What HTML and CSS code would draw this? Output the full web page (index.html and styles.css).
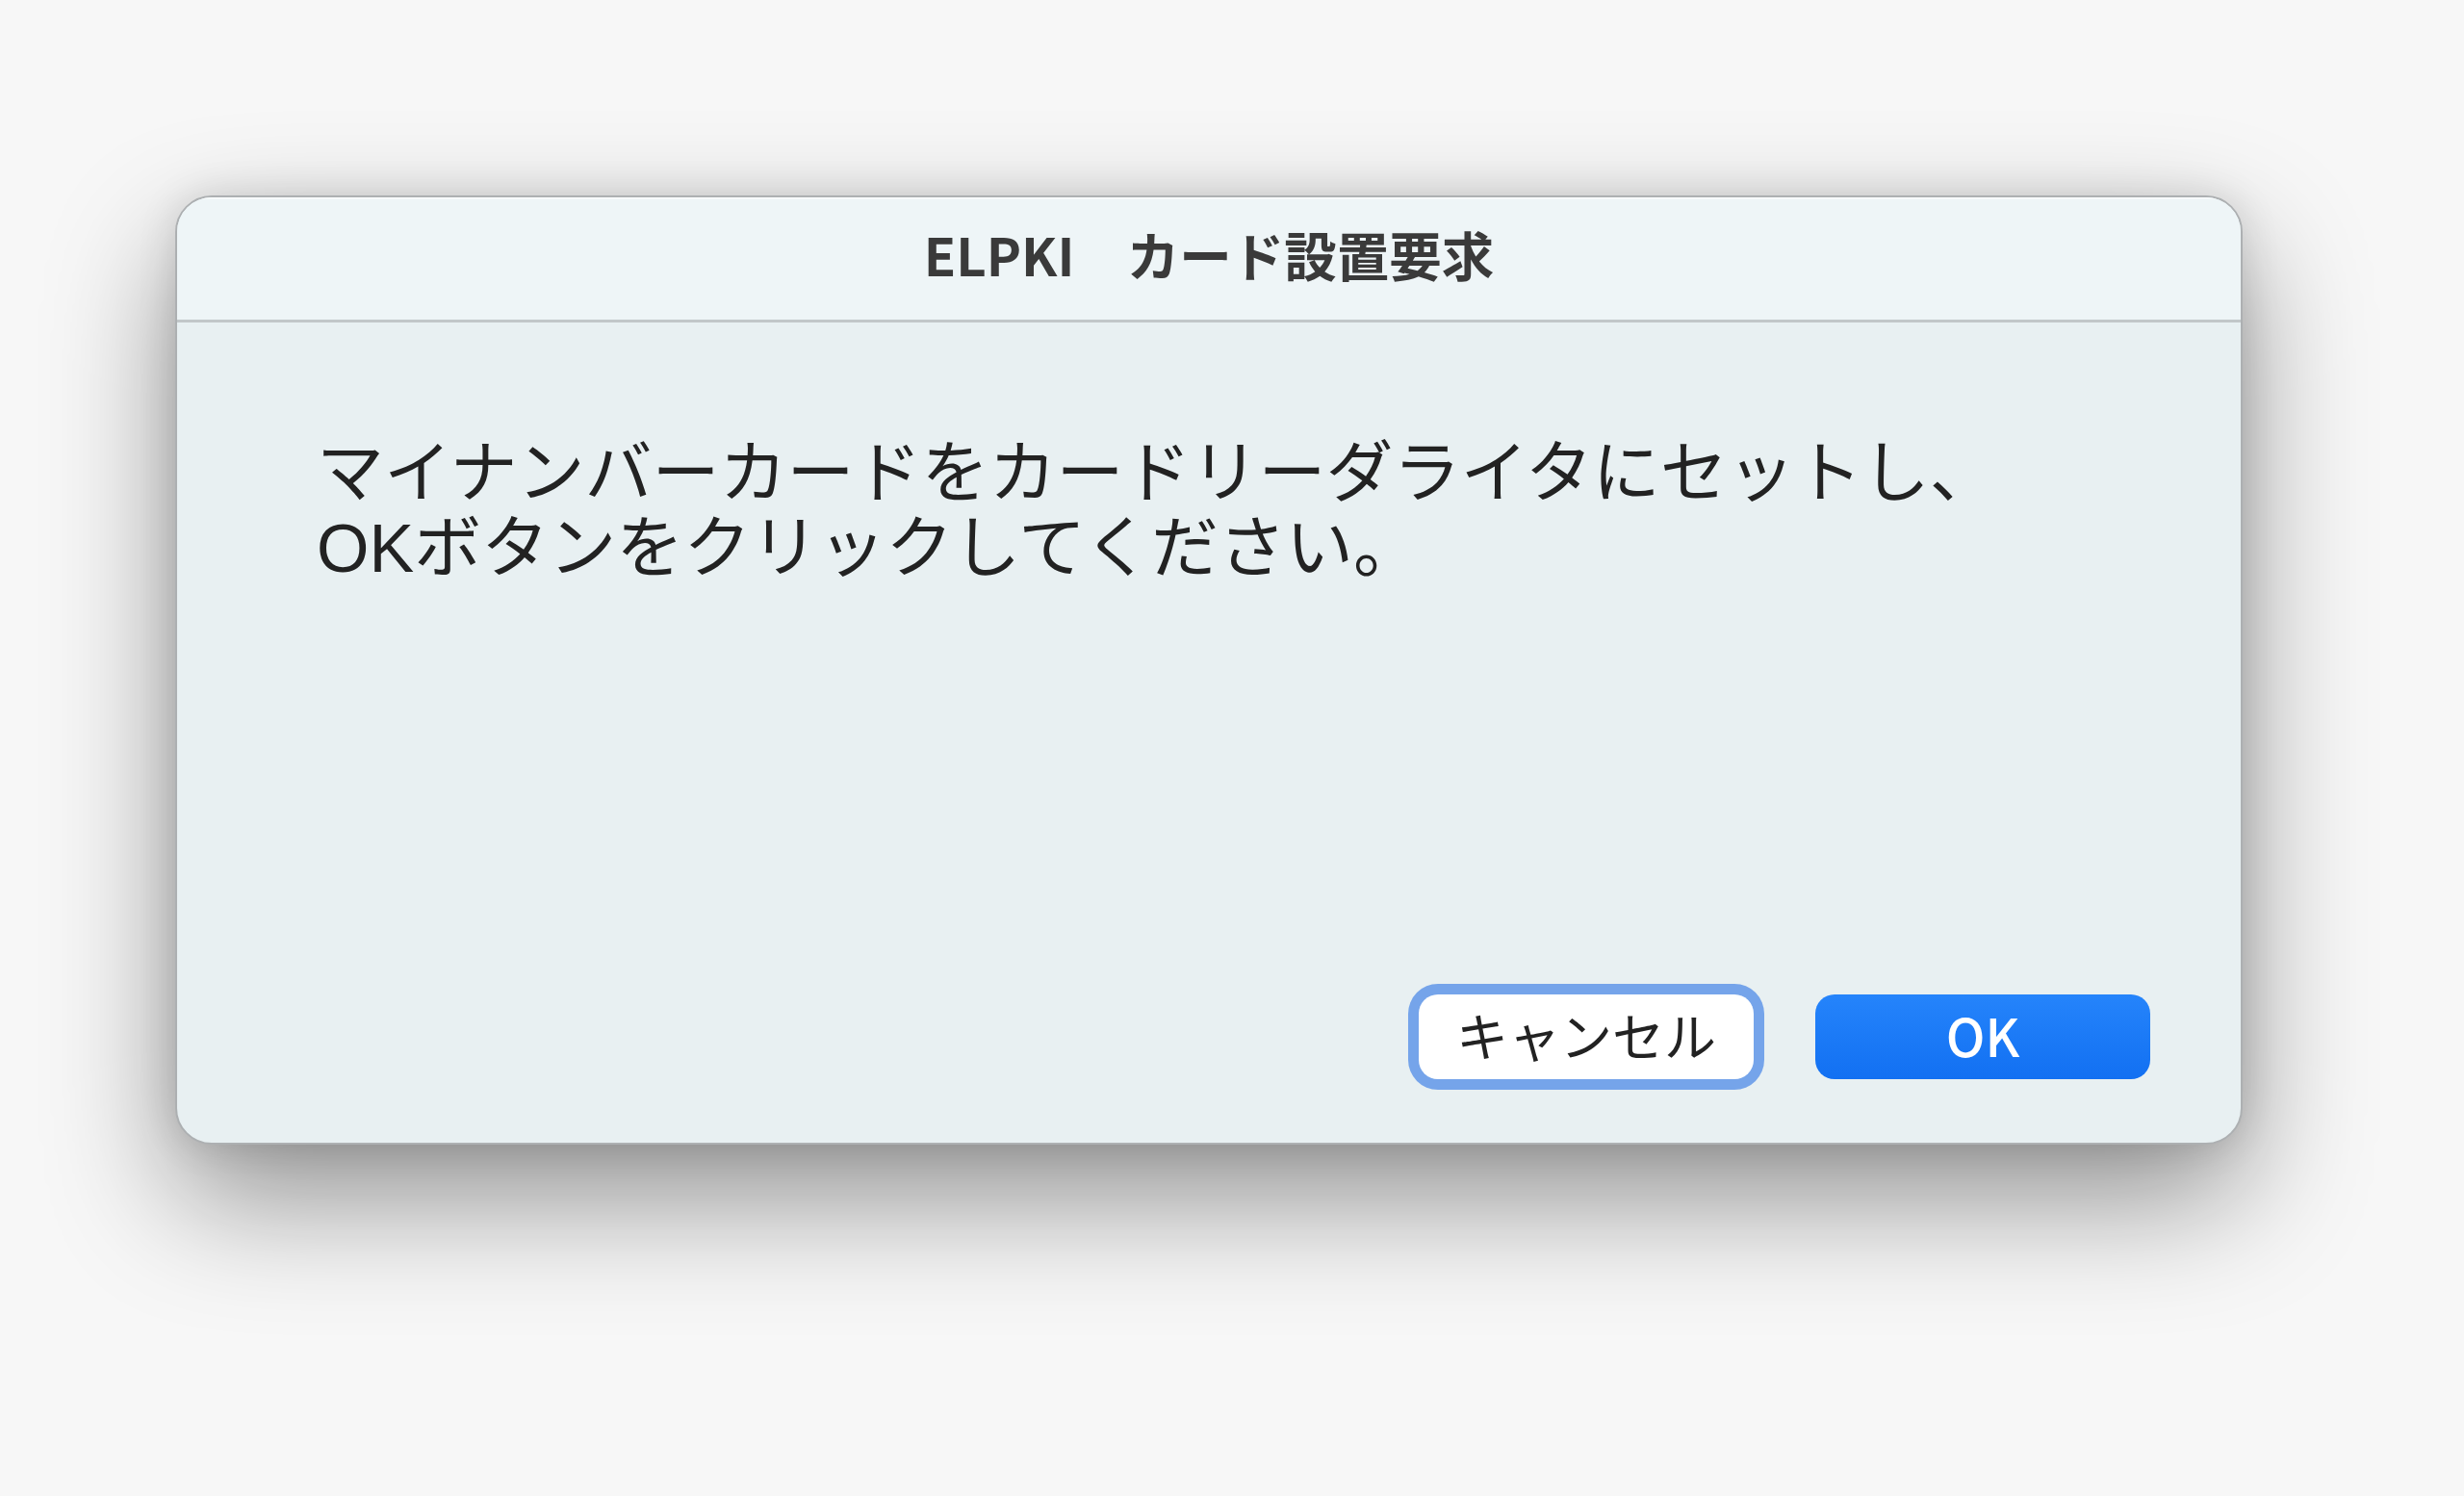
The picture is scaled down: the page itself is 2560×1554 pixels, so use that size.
FILE: index.html
```html
<!DOCTYPE html>
<html lang="ja">

<head>
    <meta charset="UTF-8">
    <meta name="viewport" content="width=device-width, initial-scale=1.0">
    <title>ELPKI カード設置要求</title>

    <link rel="stylesheet" href="styles.css">
</head>

<body>

    <div class="dialog">
        <div class="dialog-title">ELPKI　カード設置要求</div>
        <div class="dialog-body">
            <p class="message">マイナンバーカードをカードリーダライタにセットし、<br>OKボタンをクリックしてください。</p>

            <div class="buttons">
                <button class="btn btn-cancel" type="button">キャンセル</button>
                <button class="btn btn-ok" type="button">OK</button>
            </div>
        </div>
    </div>

</body>

</html>
```

FILE: styles.css
```css
body {
    font-family: "Noto Sans CJK JP", "Noto Sans", sans-serif;
    background-color: #f7f7f7;
    margin: 0;
    padding: 203px 0 0 182px;
    height: 1554px;
    box-sizing: border-box;
    overflow: hidden;
}

.dialog {
    width: 2148px;
    height: 986px;
    box-sizing: border-box;
    display: flex;
    flex-direction: column;
    background-color: #e8f0f2;
    border: 2px solid #adb0b2;
    border-radius: 38px;
    overflow: hidden;
    box-shadow: 0 55px 130px rgba(0, 0, 0, 0.42), 0 0 40px rgba(0, 0, 0, 0.12);
}

.dialog-title {
    height: 130px;
    flex-shrink: 0;
    display: flex;
    align-items: center;
    justify-content: center;
    box-sizing: border-box;
    padding-bottom: 12px;
    background-color: #eef5f7;
    border-top: 2px solid #f8fbfc;
    border-bottom: 3px solid #c1c7c9;
    font-size: 54.5px;
    font-weight: bold;
    color: #3a3a3a;
}

.dialog-body {
    flex: 1;
    display: flex;
    flex-direction: column;
    padding: 118px 94px 66px 145px;
}

.message {
    margin: 0;
    font-family: "Liberation Sans", "Noto Sans CJK JP", sans-serif;
    font-size: 70px;
    line-height: 78px;
    color: #222;
}

.buttons {
    margin-top: auto;
    display: flex;
    justify-content: flex-end;
    gap: 64px;
}

.btn {
    width: 348px;
    height: 88px;
    border: none;
    border-radius: 20px;
    font-family: inherit;
    font-size: 54px;
    padding: 0 0 5px;
    cursor: pointer;
}

.btn-cancel {
    background-color: #fff;
    color: #222;
    box-shadow: 0 0 0 11px #75a4ea;
}

.btn-ok {
    background: linear-gradient(to bottom, #2584fb 0%, #1270f2 100%);
    color: #fff;
    font-weight: 500;
}
```
